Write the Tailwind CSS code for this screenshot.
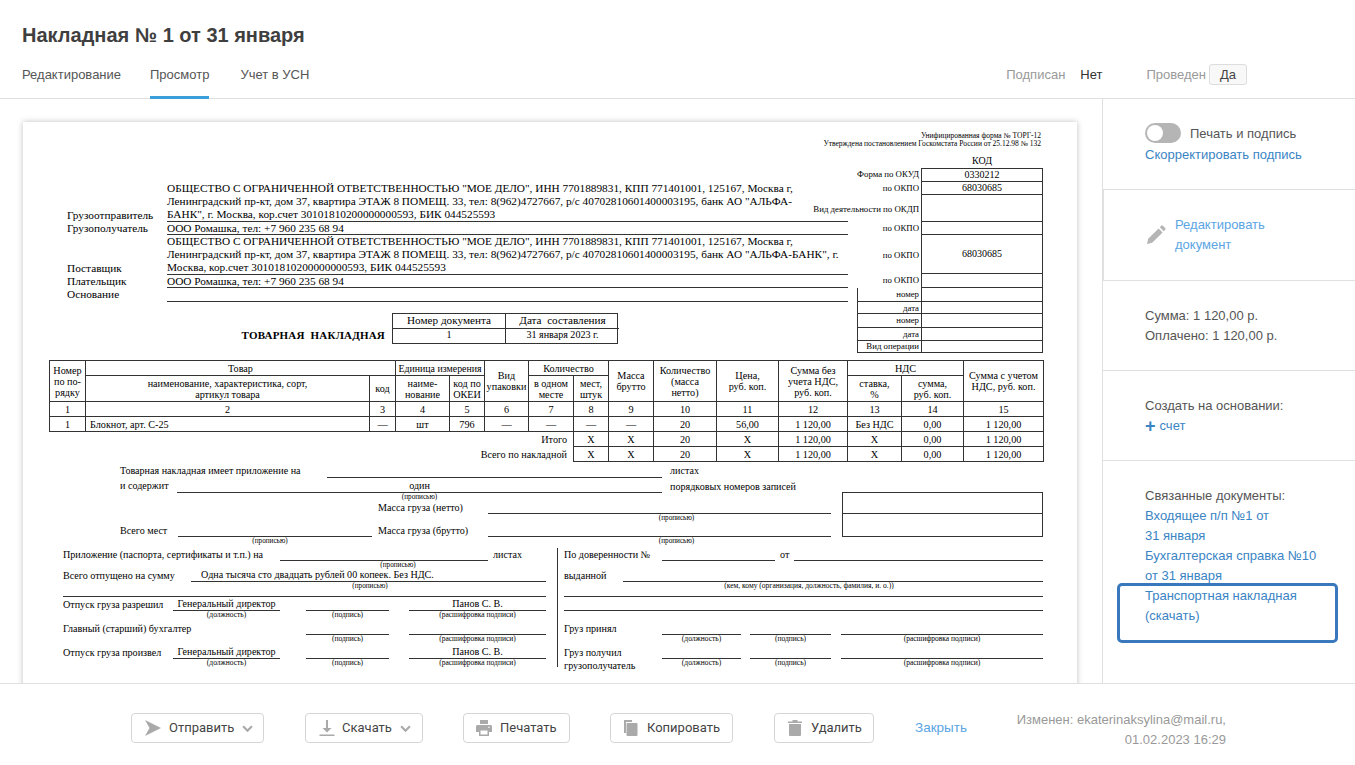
<!DOCTYPE html>
<html lang="ru">
<head>
    <meta charset="UTF-8">
    <title>Накладная № 1 от 31 января</title>
    <script src="https://cdn.jsdelivr.net/npm/@tailwindcss/browser@4"></script>
</head>
<body class="bg-white h-[765px] overflow-hidden text-[#555] text-[13px] leading-[20px] [font-family:'Liberation_Sans',Arial,sans-serif]">
    <!-- Header -->
    <header class="h-[99px] border-b border-[#e0e0e0] relative">
        <h1 class="pl-[22px] pt-[22px] text-[20px] leading-[26px] font-bold text-[#3f3f3f]">Накладная № 1 от 31 января</h1>
        <div class="flex items-start justify-between pl-[22px] pr-[108px] mt-[4px]">
            <nav class="flex gap-[30px]">
                <a class="w-[98px] whitespace-nowrap h-[47px] pt-[13px] text-[#555]">Редактирование</a>
                <a class="h-[47px] pt-[13px] text-[#555] border-b-[3px] border-[#3b9fdc]">Просмотр</a>
                <a class="ml-px h-[47px] pt-[13px] text-[#555]">Учет в УСН</a>
            </nav>
            <div class="flex items-center pt-[12px]">
                <span class="text-[#999]">Подписан</span>
                <span class="ml-[15px] text-[#333]">Нет</span>
                <span class="ml-[44px] text-[#999]">Проведен</span>
                <span class="ml-[3px] w-[38px] h-[21px] leading-[19px] text-center border border-[#ddd] rounded-[3px] bg-[#f8f8f8] text-[#444]">Да</span>
            </div>
        </div>
    </header>

    <div class="flex h-[584px]">
        <!-- Document -->
        <main class="w-[1102px] h-[584px] overflow-hidden pt-[23px] pl-[23px]">
            <div class="w-[1054px] px-[26px] pt-[10px] pb-[40px] bg-white shadow-[0_0_6px_rgba(0,0,0,0.25)] text-black text-[10.1px] leading-[12px] [font-family:'Liberation_Serif','Times_New_Roman',serif]">
                <div class="text-right pr-[10px] text-[7.5px] leading-[8px]">
                    <p>Унифицированная форма № ТОРГ-12</p>
                    <p>Утверждена постановлением Госкомстата России от 25.12.98 № 132</p>
                </div>

                <div class="flex mt-[7px]">
                    <div class="w-[799px] pt-[27px]">
                        <div class="pl-[18px] grid grid-cols-[100px_681px] grid-rows-[40px_13px_40px_13px_14px] text-[11.3px] leading-[13px]">
                            <div class="self-end">Грузоотправитель</div>
                            <div class="border-b border-[#333] whitespace-nowrap">ОБЩЕСТВО С ОГРАНИЧЕННОЙ ОТВЕТСТВЕННОСТЬЮ "МОЕ ДЕЛО", ИНН 7701889831, КПП 771401001, 125167, Москва г,<br>Ленинградский пр-кт, дом 37, квартира ЭТАЖ 8 ПОМЕЩ. 33, тел: 8(962)4727667, р/с 40702810601400003195, банк АО "АЛЬФА-<br>БАНК", г. Москва, кор.счет 30101810200000000593, БИК 044525593</div>
                            <div>Грузополучатель</div>
                            <div class="border-b border-[#333]">ООО Ромашка, тел: +7 960 235 68 94</div>
                            <div class="self-end">Поставщик</div>
                            <div class="border-b border-[#333] whitespace-nowrap">ОБЩЕСТВО С ОГРАНИЧЕННОЙ ОТВЕТСТВЕННОСТЬЮ "МОЕ ДЕЛО", ИНН 7701889831, КПП 771401001, 125167, Москва г,<br>Ленинградский пр-кт, дом 37, квартира ЭТАЖ 8 ПОМЕЩ. 33, тел: 8(962)4727667, р/с 40702810601400003195, банк АО "АЛЬФА-БАНК", г.<br>Москва, кор.счет 30101810200000000593, БИК 044525593</div>
                            <div>Плательщик</div>
                            <div class="border-b border-[#333]">ООО Ромашка, тел: +7 960 235 68 94</div>
                            <div>Основание</div>
                            <div class="border-b border-[#333]"></div>
                        </div>
                        <div class="flex mt-[11px]">
                            <div class="w-[343px] pr-[7px] pt-[16px] text-right font-bold text-[11px] leading-[13px] tracking-[0.2px]">ТОВАРНАЯ&nbsp; НАКЛАДНАЯ</div>
                            <div class="w-[226px] grid grid-cols-[113px_113px] grid-rows-[15px_14px] border border-[#333] text-center">
                                <div class="border-r border-b border-[#333] text-[11.2px]">Номер документа</div>
                                <div class="border-b border-[#333] text-[11.2px]">Дата&nbsp; составления</div>
                                <div class="border-r border-[#333]">1</div>
                                <div>31 января 2023 г.</div>
                            </div>
                        </div>
                    </div>

                    <!-- Codes -->
                    <div class="w-[195px] text-[8.8px] leading-[12px]">
                        <div class="flex h-[13px]"><div class="w-[73px]"></div><div class="w-[122px] text-center text-[10px]">КОД</div></div>
                        <div class="flex h-[14px]"><div class="w-[73px] flex justify-end pr-[2px] whitespace-nowrap">Форма по ОКУД</div><div class="w-[122px] text-center text-[10px] border border-[#333]">0330212</div></div>
                        <div class="flex h-[13px]"><div class="w-[73px] flex justify-end pr-[2px] whitespace-nowrap">по ОКПО</div><div class="w-[122px] text-center text-[10px] border-x border-b border-[#333]">68030685</div></div>
                        <div class="flex h-[27px]"><div class="w-[73px] flex justify-end items-center pr-[2px] whitespace-nowrap">Вид деятельности по ОКДП</div><div class="w-[122px] border-x border-b border-[#333]"></div></div>
                        <div class="flex h-[13px]"><div class="w-[73px] flex justify-end pr-[2px] whitespace-nowrap">по ОКПО</div><div class="w-[122px] border-x border-b border-[#333]"></div></div>
                        <div class="flex h-[39px]"><div class="w-[73px] flex justify-end items-center pr-[2px] whitespace-nowrap">по ОКПО</div><div class="w-[122px] flex items-center justify-center text-[10px] border-x border-b border-[#333]">68030685</div></div>
                        <div class="flex h-[14px]"><div class="w-[73px] flex justify-end pr-[2px] whitespace-nowrap">по ОКПО</div><div class="w-[122px] border-x border-b border-[#333]"></div></div>
                        <div class="flex h-[14px]"><div class="ml-[9px] w-[64px] text-right pr-[2px] border-l border-b border-[#333]">номер</div><div class="w-[122px] border-x border-b border-[#333]"></div></div>
                        <div class="flex h-[12px]"><div class="ml-[9px] w-[64px] text-right pr-[2px] border-l border-b border-[#333]">дата</div><div class="w-[122px] border-x border-b border-[#333]"></div></div>
                        <div class="flex h-[14px]"><div class="ml-[9px] w-[64px] text-right pr-[2px] border-l border-b border-[#333]">номер</div><div class="w-[122px] border-x border-b border-[#333]"></div></div>
                        <div class="flex h-[13px]"><div class="ml-[9px] w-[64px] text-right pr-[2px] border-l border-b border-[#333]">дата</div><div class="w-[122px] border-x border-b border-[#333]"></div></div>
                        <div class="flex h-[12px] leading-[11px]"><div class="ml-[9px] w-[64px] text-right pr-[2px] border-l border-b border-[#333]">Вид операции</div><div class="w-[122px] border-x border-b border-[#333]"></div></div>
                    </div>
                </div>

                <!-- Goods table -->
                <table class="mt-[7px] w-[994px] table-fixed border-collapse text-[10.2px] leading-[11px] text-center whitespace-nowrap [&_td]:border [&_td]:border-[#333] [&_td]:p-0">
                    <colgroup>
                        <col class="w-[36px]"><col class="w-[284px]"><col class="w-[26px]"><col class="w-[54px]"><col class="w-[35px]"><col class="w-[44px]"><col class="w-[45px]"><col class="w-[35px]"><col class="w-[45px]"><col class="w-[63px]"><col class="w-[62px]"><col class="w-[69px]"><col class="w-[54px]"><col class="w-[62px]"><col class="w-[80px]">
                    </colgroup>
                    <tr class="h-[15px]">
                        <td rowspan="2">Номер<br>по по-<br>рядку</td>
                        <td colspan="2">Товар</td>
                        <td colspan="2" class="text-[9.9px]">Единица измерения</td>
                        <td rowspan="2">Вид<br>упаковки</td>
                        <td colspan="2">Количество</td>
                        <td rowspan="2">Масса<br>брутто</td>
                        <td rowspan="2">Количество<br>(масса<br>нетто)</td>
                        <td rowspan="2">Цена,<br>руб. коп.</td>
                        <td rowspan="2">Сумма без<br>учета НДС,<br>руб. коп.</td>
                        <td colspan="2">НДС</td>
                        <td rowspan="2">Сумма с учетом<br>НДС, руб. коп.</td>
                    </tr>
                    <tr class="h-[26px]">
                        <td>наименование, характеристика, сорт,<br>артикул товара</td>
                        <td>код</td>
                        <td>наиме-<br>нование</td>
                        <td>код по<br>ОКЕИ</td>
                        <td>в одном<br>месте</td>
                        <td>мест,<br>штук</td>
                        <td>ставка,<br>%</td>
                        <td>сумма,<br>руб. коп.</td>
                    </tr>
                    <tr class="h-[15px]">
                        <td>1</td><td>2</td><td>3</td><td>4</td><td>5</td><td>6</td><td>7</td><td>8</td><td>9</td><td>10</td><td>11</td><td>12</td><td>13</td><td>14</td><td>15</td>
                    </tr>
                    <tr class="h-[15px]">
                        <td>1</td><td class="text-left pl-[4px]!">Блокнот, арт. С-25</td><td>—</td><td>шт</td><td>796</td><td>—</td><td>—</td><td>—</td><td>—</td><td>20</td><td>56,00</td><td>1 120,00</td><td>Без НДС</td><td>0,00</td><td>1 120,00</td>
                    </tr>
                    <tr class="h-[15px]">
                        <td colspan="7" class="border-0! text-right pr-[6px]!">Итого</td><td>Х</td><td>Х</td><td>20</td><td>Х</td><td>1 120,00</td><td>Х</td><td>0,00</td><td>1 120,00</td>
                    </tr>
                    <tr class="h-[15px]">
                        <td colspan="7" class="border-0! text-right pr-[6px]!">Всего по накладной</td><td>Х</td><td>Х</td><td>20</td><td>Х</td><td>1 120,00</td><td>Х</td><td>0,00</td><td>1 120,00</td>
                    </tr>
                </table>

                <!-- Attachments and weights -->
                <div class="flex">
                    <div class="w-[793px] pl-[71px]">
                        <div class="flex items-end h-[16px]">
                            <span class="w-[207px] pb-[1px]">Товарная накладная имеет приложение на</span>
                            <span class="w-[335px] h-[16px] border-b border-[#333]"></span>
                            <span class="ml-[8px] pb-[1px]">листах</span>
                        </div>
                        <div class="flex items-end h-[15px]">
                            <span class="w-[57px] pb-[1px]">и содержит</span>
                            <span class="w-[485px] text-center border-b border-[#333]">один</span>
                            <span class="ml-[8px]">порядковых номеров записей</span>
                        </div>
                        <div class="h-[8px] ml-[57px] w-[485px] text-center text-[7.2px] leading-[8px]">(прописью)</div>
                        <div class="flex items-end h-[13px]">
                            <span class="ml-[258px] w-[110px]">Масса груза (нетто)</span>
                            <span class="w-[343px] h-[13px] border-b border-[#333]"></span>
                        </div>
                        <div class="h-[8px] ml-[400px] w-[313px] text-center text-[7.2px] leading-[8px]">(прописью)</div>
                        <div class="flex items-end h-[15px]">
                            <span class="w-[58px]">Всего мест</span>
                            <span class="w-[194px] h-[15px] border-b border-[#333]"></span>
                            <span class="ml-[6px] w-[110px]">Масса груза (брутто)</span>
                            <span class="w-[343px] h-[15px] border-b border-[#333]"></span>
                        </div>
                        <div class="flex h-[8px] text-[7.2px] leading-[8px] text-center">
                            <span class="w-[300px]">(прописью)</span>
                            <span class="ml-[100px] w-[313px]">(прописью)</span>
                        </div>
                    </div>
                    <div class="w-[201px] h-[45px] mt-[30px] border border-[#333] grid grid-rows-[21px_22px]">
                        <div class="border-b border-[#333]"></div>
                        <div></div>
                    </div>
                </div>

                <!-- Release and receipt -->
                <div class="flex mt-[3px]">
                    <div class="w-[508px] pl-[14px]">
                        <div class="flex items-end h-[13px]">
                            <span class="w-[217px]">Приложение (паспорта, сертификаты и т.п.) на</span>
                            <span class="w-[208px] h-[13px] border-b border-[#333]"></span>
                            <span class="ml-[5px]">листах</span>
                        </div>
                        <div class="h-[8px] ml-[217px] w-[236px] text-center text-[7.2px] leading-[8px]">(прописью)</div>
                        <div class="flex items-end h-[13px]">
                            <span class="w-[128px]">Всего отпущено на сумму</span>
                            <span class="w-[355px] pl-[10px] border-b border-[#333]">Одна тысяча сто двадцать рублей 00 копеек. Без НДС.</span>
                        </div>
                        <div class="h-[7px] ml-[128px] w-[358px] text-center text-[7.2px] leading-[8px]">(прописью)</div>
                        <div class="h-[8px] w-[483px] border-b border-[#333]"></div>
                        <div class="flex items-end h-[14px]">
                            <span class="w-[110px]">Отпуск груза разрешил</span>
                            <span class="w-[107px] text-center border-b border-[#333]">Генеральный директор</span>
                            <span class="ml-[26px] w-[83px] h-[14px] border-b border-[#333]"></span>
                            <span class="ml-[20px] w-[137px] text-center border-b border-[#333]">Панов С. В.</span>
                        </div>
                        <div class="flex h-[8px] text-[7.5px] leading-[8px] text-center">
                            <span class="ml-[110px] w-[107px]">(должность)</span>
                            <span class="ml-[26px] w-[83px]">(подпись)</span>
                            <span class="ml-[20px] w-[137px]">(расшифровка подписи)</span>
                        </div>
                        <div class="flex items-end h-[16px]">
                            <span class="w-[243px]">Главный (старший) бухгалтер</span>
                            <span class="w-[83px] h-[16px] border-b border-[#333]"></span>
                            <span class="ml-[20px] w-[137px] h-[16px] border-b border-[#333]"></span>
                        </div>
                        <div class="flex h-[8px] text-[7.5px] leading-[8px] text-center">
                            <span class="ml-[243px] w-[83px]">(подпись)</span>
                            <span class="ml-[20px] w-[137px]">(расшифровка подписи)</span>
                        </div>
                        <div class="flex items-end h-[16px]">
                            <span class="w-[110px]">Отпуск груза произвел</span>
                            <span class="w-[107px] text-center border-b border-[#333]">Генеральный директор</span>
                            <span class="ml-[26px] w-[83px] h-[16px] border-b border-[#333]"></span>
                            <span class="ml-[20px] w-[137px] text-center border-b border-[#333]">Панов С. В.</span>
                        </div>
                        <div class="flex h-[8px] text-[7.5px] leading-[8px] text-center">
                            <span class="ml-[110px] w-[107px]">(должность)</span>
                            <span class="ml-[26px] w-[83px]">(подпись)</span>
                            <span class="ml-[20px] w-[137px]">(расшифровка подписи)</span>
                        </div>
                    </div>
                    <div class="w-[486px] pl-[6px] border-l border-[#333]">
                        <div class="flex items-end h-[13px]">
                            <span class="w-[98px]">По доверенности №</span>
                            <span class="w-[113px] h-[13px] border-b border-[#333]"></span>
                            <span class="ml-[5px] w-[14px]">от</span>
                            <span class="w-[249px] h-[13px] border-b border-[#333]"></span>
                        </div>
                        <div class="h-[8px]"></div>
                        <div class="flex items-end h-[13px]">
                            <span class="w-[59px]">выданной</span>
                            <span class="w-[420px] h-[13px] border-b border-[#333]"></span>
                        </div>
                        <div class="h-[7px] w-[490px] text-center text-[7.5px] leading-[8px]">(кем, кому (организация, должность, фамилия, и. о.))</div>
                        <div class="h-[8px] w-[479px] border-b border-[#333]"></div>
                        <div class="h-[14px] w-[479px] border-b border-[#333]"></div>
                        <div class="h-[8px]"></div>
                        <div class="flex items-end h-[16px]">
                            <span class="w-[98px]">Груз принял</span>
                            <span class="w-[79px] h-[16px] border-b border-[#333]"></span>
                            <span class="ml-[9px] w-[81px] h-[16px] border-b border-[#333]"></span>
                            <span class="ml-[10px] w-[202px] h-[16px] border-b border-[#333]"></span>
                        </div>
                        <div class="flex h-[8px] text-[7.5px] leading-[8px] text-center">
                            <span class="ml-[98px] w-[79px]">(должность)</span>
                            <span class="ml-[9px] w-[81px]">(подпись)</span>
                            <span class="ml-[10px] w-[202px]">(расшифровка подписи)</span>
                        </div>
                        <div class="flex items-end h-[16px]">
                            <span class="w-[98px]">Груз получил</span>
                            <span class="w-[79px] h-[16px] border-b border-[#333]"></span>
                            <span class="ml-[9px] w-[81px] h-[16px] border-b border-[#333]"></span>
                            <span class="ml-[10px] w-[202px] h-[16px] border-b border-[#333]"></span>
                        </div>
                        <div class="flex h-[8px] text-[7.5px] leading-[8px] text-center">
                            <span class="w-[98px] text-left text-[10.1px] leading-[13px]">грузополучатель</span>
                            <span class="w-[79px]">(должность)</span>
                            <span class="ml-[9px] w-[81px]">(подпись)</span>
                            <span class="ml-[10px] w-[202px]">(расшифровка подписи)</span>
                        </div>
                    </div>
                </div>
            </div>
        </main>

        <!-- Sidebar -->
        <aside class="relative w-[253px] border-l border-[#e0e0e0]">
            <section class="h-[91px] pl-[42px] pt-[24px] border-b border-[#e0e0e0]">
                <div class="flex items-center h-[20px]">
                    <span class="w-[36px] h-[20px] rounded-full bg-[#b5b5b5] p-[2px]"><span class="block w-[16px] h-[16px] rounded-full bg-white"></span></span>
                    <span class="ml-[9px] pt-[1px]">Печать и подпись</span>
                </div>
                <a class="block mt-[1px] pt-[1px] text-[#3a84c4]">Скорректировать подпись</a>
            </section>
            <section class="h-[91px] pl-[42px] flex items-center border-l border-b border-[#e0e0e0]">
                <svg class="w-[20px] h-[20px] text-[#b5b5b5]" viewBox="0 0 20 20" fill="currentColor"><path d="M1 19l1.2-5.200L12.600 3.400l4 4L6.200 17.800 1 19zM13.800 2.200l1.400-1.400c.5-.5 1.200-.5 1.700 0l2.300 2.300c.5.5.5 1.200 0 1.700l-1.400 1.400-4-4z"/></svg>
                <a class="ml-[9px] text-[#5aa5e3]">Редактировать<br>документ</a>
            </section>
            <section class="h-[90px] pl-[42px] pt-[25px] border-b border-[#e0e0e0]">
                <p>Сумма: 1 120,00 р.</p>
                <p>Оплачено: 1 120,00 р.</p>
            </section>
            <section class="h-[90px] pl-[42px] pt-[25px] border-b border-[#e0e0e0]">
                <p>Создать на основании:</p>
                <a class="flex items-center text-[#3a84c4]"><span class="text-[18px] font-bold leading-[20px] mr-[4px]">+</span>счет</a>
            </section>
            <section class="pl-[42px] pt-[25px]">
                <p>Связанные документы:</p>
                <a class="block text-[#3a84c4]">Входящее п/п №1 от<br>31 января</a>
                <a class="block text-[#3a84c4]">Бухгалтерская справка №10<br>от 31 января</a>
                <a class="block text-[#3a84c4]">Транспортная накладная<br>(скачать)</a>
            </section>
            <div class="absolute left-[14px] top-[484px] w-[221px] h-[60px] border-[3px] border-[#3a78bd] rounded-[5px]"></div>
        </aside>
    </div>

    <!-- Footer -->
    <footer class="h-[82px] border-t border-[#e0e0e0] bg-white flex items-start pl-[131px] pt-[29px] [font-family:Roboto,sans-serif] text-[#444]">
        <button class="w-[133px] h-[30px] flex items-center pl-[13px] border border-[#d5d5d5] rounded-[4px]">
            <svg class="w-[16px] h-[16px] text-[#aaa]" viewBox="0 0 16 16" fill="currentColor"><path d="M0 0l16 8-16 8 4.500-8z"/></svg>
            <span class="ml-[8px]">Отправить</span>
            <svg class="ml-[8px] w-[11px] h-[7px] text-[#aaa]" viewBox="0 0 10 6" fill="none" stroke="currentColor" stroke-width="2"><path d="M1 1l4 4 4-4"/></svg>
        </button>
        <button class="ml-[41px] w-[118px] h-[30px] flex items-center pl-[13px] border border-[#d5d5d5] rounded-[4px]">
            <svg class="w-[16px] h-[16px] text-[#aaa]" viewBox="0 0 16 16" fill="currentColor"><path d="M7 0h2v8h3.500L8 12.500 3.500 8H7zM0.500 14.500h15V16H.5z"/></svg>
            <span class="ml-[7px]">Скачать</span>
            <svg class="ml-[8px] w-[11px] h-[7px] text-[#aaa]" viewBox="0 0 10 6" fill="none" stroke="currentColor" stroke-width="2"><path d="M1 1l4 4 4-4"/></svg>
        </button>
        <button class="ml-[40px] w-[107px] h-[30px] flex items-center pl-[12px] border border-[#d5d5d5] rounded-[4px]">
            <svg class="w-[16px] h-[16px] text-[#aaa]" viewBox="0 0 16 16" fill="currentColor"><path d="M4 0h8v4H4zM1.500 5h13c.8 0 1.500.7 1.500 1.500V12h-3v4H3v-4H0V6.500C0 5.700.7 5 1.500 5zM4.500 10.500V14.500h7V10.500zM13 6.500a.8.8 0 100 1.600.8.8 0 000-1.600z"/></svg>
            <span class="ml-[8px]">Печатать</span>
        </button>
        <button class="ml-[40px] w-[123px] h-[30px] flex items-center pl-[12px] border border-[#d5d5d5] rounded-[4px]">
            <svg class="w-[16px] h-[16px] text-[#aaa]" viewBox="0 0 16 16" fill="currentColor"><path d="M1 0h8v2H3v11H1zM4.500 3h9c.5 0 1 .5 1 1v11c0 .5-.5 1-1 1h-9c-.5 0-1-.5-1-1V4c0-.5.5-1 1-1z"/></svg>
            <span class="ml-[8px]">Копировать</span>
        </button>
        <button class="ml-[41px] w-[100px] h-[30px] flex items-center pl-[12px] border border-[#d5d5d5] rounded-[4px]">
            <svg class="w-[16px] h-[16px] text-[#aaa]" viewBox="0 0 16 16" fill="currentColor"><path d="M5.500 0h5v1.500H15V3H1V1.500h4.500zM2 4h12v11c0 .5-.5 1-1 1H3c-.5 0-1-.5-1-1z"/></svg>
            <span class="ml-[8px]">Удалить</span>
        </button>
        <a class="ml-[41px] mt-[5px] text-[13.5px] text-[#5aa5e3] [font-family:'Liberation_Sans',sans-serif]">Закрыть</a>
        <p class="w-[259px] -mt-[3px] text-right text-[#999] [font-family:'Liberation_Sans',sans-serif]">Изменен: ekaterinaksylina@mail.ru,<br>01.02.2023 16:29</p>
    </footer>
</body>
</html>
